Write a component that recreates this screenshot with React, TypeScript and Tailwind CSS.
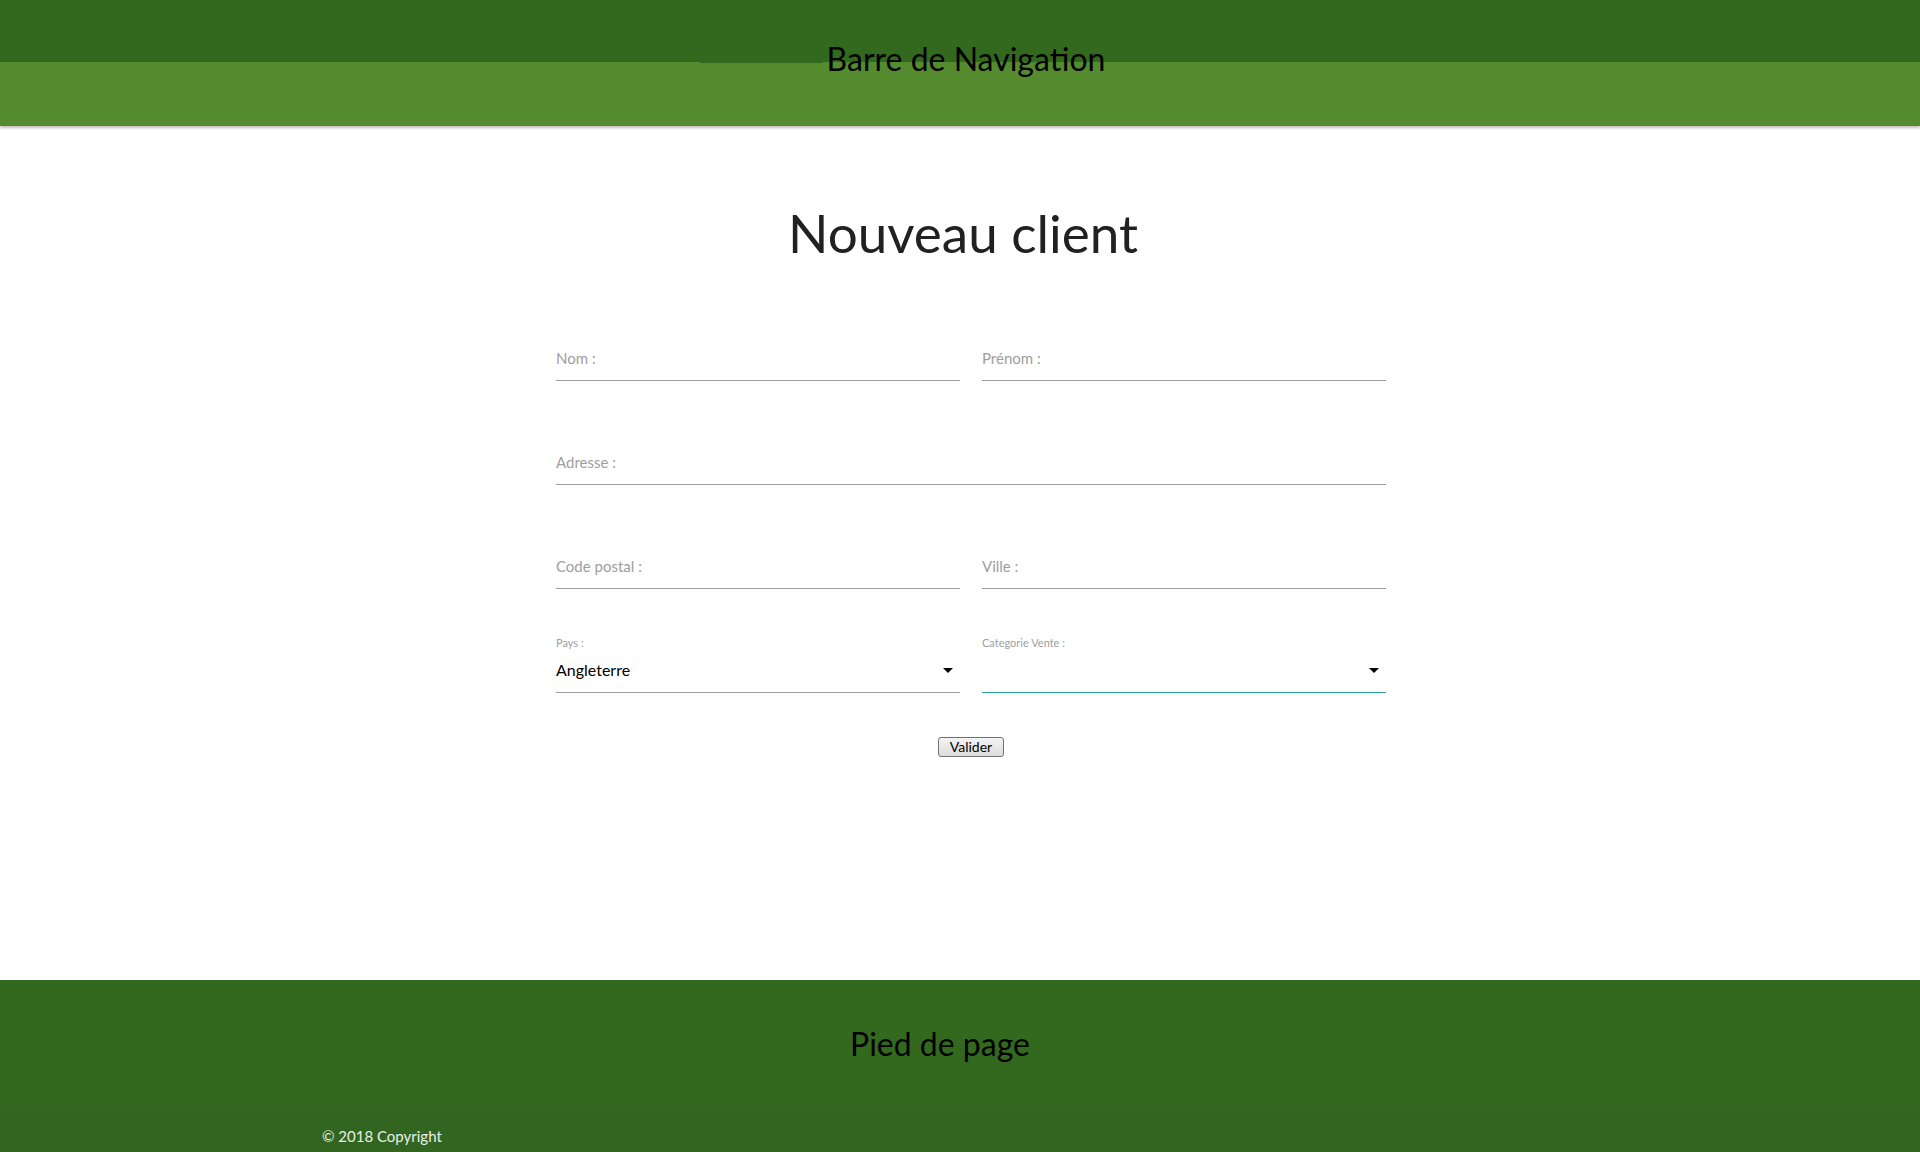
import React from "react";

const font = { fontFamily: "Lato, 'Open Sans', sans-serif" };

function Arrow() {
  return (
    <svg width="10" height="5" viewBox="0 0 10 5" className="absolute right-[7px] top-[20px]">
      <polygon points="0,0 10,0 5,5" fill="#000" />
    </svg>
  );
}

function Field({ label }: { label: string }) {
  return (
    <div className="h-[45px] flex items-end pb-[12px] border-b border-[#9e9e9e]">
      <span className="text-[15px] leading-[20px] text-[#9e9e9e]">{label}</span>
    </div>
  );
}

function SelectField({
  label,
  value,
  line,
}: {
  label: string;
  value: string;
  line: string;
}) {
  return (
    <div className={`relative h-[45px] flex items-end pb-[12px] border-b ${line}`}>
      <span className="absolute left-0 top-[-11px] text-[11px] leading-[12px] text-[#9e9e9e]">
        {label}
      </span>
      <span className="text-[16px] leading-[20px] text-black">{value}</span>
      <Arrow />
    </div>
  );
}

export default function App() {
  return (
    <div className="min-h-[1152px] flex flex-col bg-white" style={font}>
      <header className="relative h-[126px] shrink-0 shadow-[0_2px_2px_rgba(0,0,0,0.18),0_1px_4px_rgba(0,0,0,0.12)] z-10">
        <div className="h-[62px] bg-[#33691e]" />
        <div className="h-[64px] bg-[#558b2f]" />
        <div className="absolute left-[700px] top-[62px] w-[123px] h-px bg-[#33691e]" />
        <div className="absolute inset-x-0 top-[43px] pl-[12px] text-center text-[32px] leading-[32px] text-black">
          Barre de Navigation
        </div>
      </header>

      <main className="flex-1 flex flex-col items-center">
        <h1 className="mt-[77px] text-[53px] leading-[60px] text-[#212121] pl-[6px]">
          Nouveau client
        </h1>

        <div className="mt-[73px] w-[852px] pl-[22px]">
          <div className="flex flex-col gap-[59px]">
            <div className="grid grid-cols-2 gap-x-[22px]">
              <Field label="Nom :" />
              <Field label="Prénom :" />
            </div>
            <Field label="Adresse :" />
            <div className="grid grid-cols-2 gap-x-[22px]">
              <Field label="Code postal :" />
              <Field label="Ville :" />
            </div>
            <div className="grid grid-cols-2 gap-x-[22px]">
              <SelectField label="Pays :" value="Angleterre" line="border-[#9e9e9e]" />
              <SelectField label="Categorie Vente :" value="" line="border-[#26a69a]" />
            </div>
          </div>

          <div className="mt-[44px] flex justify-center">
            <button className="w-[66px] h-[20px] rounded-[3px] border border-[#707070] bg-gradient-to-b from-[#f4f4f4] to-[#dcdcdc] text-[14px] leading-[18px] text-black">
              Valider
            </button>
          </div>
        </div>
      </main>

      <footer className="h-[172px] shrink-0 bg-[#33691e] flex flex-col">
        <div className="flex-1 pt-[48px] pr-[40px] text-center text-[32px] leading-[32px] text-black">
          Pied de page
        </div>
        <div className="h-[46px] bg-[#326620] pt-[20px] pl-[322px] text-[15px] leading-[20px] text-[#e8f0e8]">
          © 2018 Copyright
        </div>
      </footer>
    </div>
  );
}
